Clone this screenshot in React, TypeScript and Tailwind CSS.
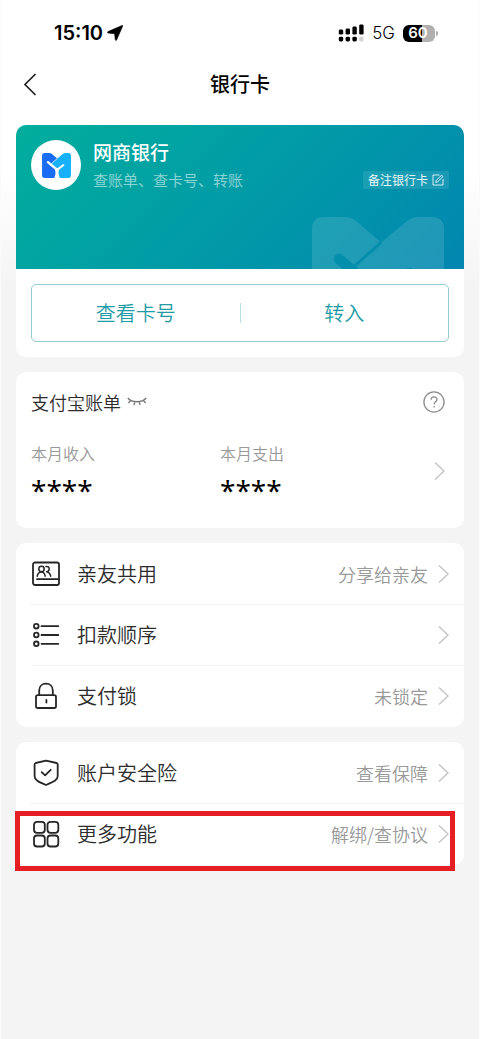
import { useId, type ReactNode } from "react";

function BankMark({ className, left, right }: { className: string; left: string; right: string }) {
  const id = useId();
  return (
    <svg viewBox="0 0 88 76" className={className} aria-hidden="true">
      <mask id={id} maskUnits="userSpaceOnUse" x="0" y="0" width="88" height="76">
        <rect width="88" height="76" fill="white" />
        <g fill="none" stroke="black" strokeLinecap="round" strokeLinejoin="round">
          <path d="M18 28 L44 50" strokeWidth="7" />
          <path d="M65 37 L47 50" strokeWidth="6" />
          <path d="M46 17 L28 33" strokeWidth="2" strokeLinecap="butt" />
        </g>
        <path d="M37 45 Q42 53 41 62 Q40 70 37 76 H54 Q50 68 50 60 Q50 53 54 46 Z" fill="black" />
      </mask>
      <g mask={`url(#${id})`}>
        <path d="M8 0 H22 Q27 0 31 4 L46 17 L28 33 L45 45 V76 H8 Q0 76 0 68 V8 Q0 0 8 0 Z" fill={left} />
        <path d="M80 0 H71 Q67 0 63 3 L46 17 L28 33 L45 45 V76 H80 Q88 76 88 68 V8 Q88 0 80 0 Z" fill={right} />
      </g>
    </svg>
  );
}

function Chevron() {
  return (
    <svg viewBox="0 0 11 20" className="h-5 w-[11px] shrink-0" fill="none" stroke="#c4c4c4" strokeWidth="1.4" aria-hidden="true">
      <path d="M1 1.5 L10 10 L1 18.5" />
    </svg>
  );
}

function RowIcon({ children }: { children: ReactNode }) {
  return (
    <svg viewBox="0 0 30 30" className="size-[30px] shrink-0" fill="none" stroke="#262626" strokeWidth="1.8" strokeLinecap="round" strokeLinejoin="round" aria-hidden="true">
      {children}
    </svg>
  );
}

const shareIcon = (
  <RowIcon>
    <rect x="2" y="3.5" width="26" height="22.5" rx="2" />
    <path d="M6 20.2 H27.5" />
    <circle cx="10.5" cy="10" r="2.7" strokeWidth="1.5" />
    <path d="M6.2 17.2 C6.6 14.8 8.2 13.2 10.4 12.8 C12.4 13.2 13.9 14.8 14.2 17.2" strokeWidth="1.5" />
    <path d="M15 7.5 C16.9 7 18.3 8.3 18.2 10 C18.1 11.6 17 12.6 15.6 12.7 C17.9 13.2 19.3 14.8 19.7 17.2" strokeWidth="1.5" />
  </RowIcon>
);

const orderIcon = (
  <RowIcon>
    <circle cx="5.3" cy="6.2" r="2.3" />
    <circle cx="5.3" cy="15" r="2.3" />
    <circle cx="5.3" cy="23.8" r="2.3" />
    <path d="M10.5 6.2 H27.3 M10.5 15 H27.3 M10.5 23.8 H27.3" />
  </RowIcon>
);

const lockIcon = (
  <RowIcon>
    <rect x="5" y="14.2" width="20" height="12.8" rx="1.8" />
    <path d="M8.2 14 V9.5 C8.2 5.5 11 2.7 15 2.7 C19 2.7 21.8 5.5 21.8 9.5 V14" />
    <path d="M15.4 18.8 V21.6" />
  </RowIcon>
);

const shieldIcon = (
  <RowIcon>
    <path d="M15 2.6 L25.6 5 Q26.7 5.3 26.7 6.4 V18.3 C26.7 22 23 23.8 15 27 C7 23.8 3.6 22 3.6 18.3 V6.4 Q3.6 5.3 4.7 5 Z" />
    <path d="M10.7 14.2 L14.1 17.4 L19.7 11.8" />
  </RowIcon>
);

const moreIcon = (
  <RowIcon>
    <rect x="3" y="2.8" width="10.8" height="11" rx="3" />
    <rect x="16.5" y="2.8" width="10.8" height="11" rx="3" />
    <rect x="3" y="16.5" width="10.8" height="11" rx="3" />
    <rect x="16.5" y="16.5" width="10.8" height="11" rx="3" />
  </RowIcon>
);

type Item = { icon: ReactNode; label: string; value?: string };

const accountItems: Item[] = [
  { icon: shareIcon, label: "亲友共用", value: "分享给亲友" },
  { icon: orderIcon, label: "扣款顺序" },
  { icon: lockIcon, label: "支付锁", value: "未锁定" },
];

const serviceItems: Item[] = [
  { icon: shieldIcon, label: "账户安全险", value: "查看保障" },
  { icon: moreIcon, label: "更多功能", value: "解绑/查协议" },
];

function ItemList({ items }: { items: Item[] }) {
  return (
    <ul className="rounded-[10px] bg-white pt-px pl-[15px]">
      {items.map((item) => (
        <li key={item.label} className="border-b border-[#f3f3f3] last:border-transparent">
          <button type="button" className="flex h-[60px] w-full items-center pr-[15px] text-left">
            {item.icon}
            <span className="ml-4 flex-1 text-[20px] leading-7 text-[#2c2c2c]">{item.label}</span>
            {item.value && <span className="mr-[10px] text-[18px] leading-6 text-[#999]">{item.value}</span>}
            <Chevron />
          </button>
        </li>
      ))}
    </ul>
  );
}

function StatusBar() {
  return (
    <div className="flex h-[66px] items-center justify-between pr-[41px] pl-[53px] font-['Inter','Noto_Sans_CJK_SC',sans-serif] text-black">
      <div className="flex items-center gap-1">
        <span className="text-[20px] leading-6 font-semibold">15:10</span>
        <svg viewBox="0 0 16 16" className="size-4" aria-hidden="true">
          <path d="M15 .5 Q16 .2 15.6 1.2 L9.6 15 Q8.8 16.3 8.3 14.8 L7.6 8.7 L1.2 8.1 Q-.4 7.6 1 6.6 Z" fill="#000" stroke="#000" strokeWidth="0.6" />
        </svg>
      </div>
      <div className="flex items-center gap-2">
        <svg viewBox="0 0 26 18" className="h-[18px] w-[26px]" aria-hidden="true">
          <rect x="0.8" y="5.6" width="4.4" height="5" rx="1.4" />
          <rect x="7.6" y="4.4" width="4.4" height="6.2" rx="1.4" />
          <rect x="14.4" y="2.6" width="4.4" height="8" rx="1.4" />
          <rect x="21.2" y="0.4" width="4.4" height="10.2" rx="1.4" />
          <rect x="0.8" y="12.8" width="4.4" height="4.6" rx="1.4" />
          <rect x="7.6" y="12.8" width="4.4" height="4.6" rx="1.4" />
          <rect x="14.4" y="12.8" width="4.4" height="4.6" rx="1.4" />
          <rect x="21.2" y="12.8" width="4.4" height="4.6" rx="1.4" fill="#d2d2d2" />
        </svg>
        <span className="text-[17px] leading-6">5G</span>
        <div className="flex items-center gap-px">
          <span className="flex h-[17px] w-8 items-center justify-center rounded-[6px] bg-[linear-gradient(90deg,#000_60%,#b0b0b0_60%)] pr-0.5 text-[15px] leading-4 font-semibold text-white">
            60
          </span>
          <span className="h-[5px] w-0.5 rounded-r-full bg-[#b0b0b0]" />
        </div>
      </div>
    </div>
  );
}

function Amount({ label }: { label: string }) {
  return (
    <div>
      <dt className="text-[16px] leading-6 text-[#999]">{label}</dt>
      <dd className="h-9 pt-1 font-['Noto_Sans',sans-serif] text-[28px] leading-[42px] font-normal text-black">****</dd>
    </div>
  );
}

export default function App() {
  return (
    <div className="relative min-h-screen border-x border-[#fafafa] bg-[linear-gradient(180deg,#fff_170px,#f4f4f4_290px)] font-['Noto_Sans_CJK_SC',sans-serif] font-[350]">
      <StatusBar />

      <header className="grid h-9 grid-cols-[1fr_auto_1fr] items-center px-5">
        <button type="button" aria-label="返回" className="w-6">
          <svg viewBox="0 0 24 24" className="size-6" fill="none" stroke="#222" strokeWidth="1.7" aria-hidden="true">
            <path d="M14.5 2 L4 12.5 L14.5 23" />
          </svg>
        </button>
        <h1 className="text-[20px] leading-7 font-medium text-black">银行卡</h1>
      </header>

      <main className="flex flex-col gap-[15px] px-[15px] pt-[23px] pb-10">
        <section className="overflow-hidden rounded-[10px] bg-white">
          <div className="relative h-36 overflow-hidden bg-[linear-gradient(135deg,#02ae9c,#0199a8_55%,#0286b0)] px-[15px] pt-[15px]">
            <BankMark className="absolute top-[92px] right-5 h-[114px] w-[132px] opacity-12" left="#fff" right="#fff" />
            <div className="flex">
              <div className="flex size-[50px] shrink-0 items-center justify-center rounded-full bg-white">
                <BankMark className="h-[25px] w-[29px]" left="#1a6cf5" right="#16b0fb" />
              </div>
              <div className="ml-3 flex-1">
                <h2 className="text-[19px] leading-6 font-medium text-white">网商银行</h2>
                <div className="flex h-8 items-center justify-between">
                  <p className="text-[15px] leading-5 text-white/55">查账单、查卡号、转账</p>
                  <button type="button" className="flex h-[18px] items-center gap-1 rounded-[2px] bg-white/10 px-[5px] text-[12px] leading-4 font-normal text-white/90">
                    备注银行卡
                    <svg viewBox="0 0 12 12" className="size-3" fill="none" stroke="currentColor" strokeWidth="0.9" aria-hidden="true">
                      <path d="M7.5 1 H1 V11 H11 V5" />
                      <path d="M3.8 8.4 L4.3 6.4 L9.6 1.1 L11 2.5 L5.7 7.8 Z" />
                    </svg>
                  </button>
                </div>
              </div>
            </div>
          </div>
          <div className="p-[15px]">
            <div className="flex h-[58px] items-center rounded-[5px] border border-[#93cdd3] text-[20px] leading-7 text-[#1f9ba5]">
              <button type="button" className="h-full flex-1">查看卡号</button>
              <span className="h-5 w-px bg-[#b9dfe3]" />
              <button type="button" className="h-full flex-1">转入</button>
            </div>
          </div>
        </section>

        <section className="h-[156px] rounded-[10px] bg-white pt-4 pr-[19px] pl-[15px]">
          <div className="flex h-7 items-center">
            <h2 className="text-[18px] leading-7 text-[#2c2c2c]">支付宝账单</h2>
            <button type="button" aria-label="显示金额" className="ml-1.5">
              <svg viewBox="0 0 20 10" className="h-[10px] w-5" fill="none" stroke="#777" strokeWidth="1.3" aria-hidden="true">
                <path d="M.8 1 C5 6 15 6 19.2 1 M3.7 3.3 L1.4 6 M7.9 4.7 L6.9 8 M12.1 4.7 L13.1 8 M16.3 3.3 L18.6 6" />
              </svg>
            </button>
            <button type="button" aria-label="帮助" className="ml-auto">
              <svg viewBox="0 0 22 22" className="size-[22px]" fill="none" stroke="#8c8c8c" strokeWidth="1.3" aria-hidden="true">
                <circle cx="11" cy="11" r="10.1" />
                <path d="M8.1 8.8 C8.1 4.9 14 5 14 8.6 C14 10.9 11.1 10.8 11.1 13.4 M11.1 15 V16.4" />
              </svg>
            </button>
          </div>
          <div className="mt-[25px] flex items-center justify-between">
            <dl className="grid flex-1 grid-cols-[189px_1fr]">
              <Amount label="本月收入" />
              <Amount label="本月支出" />
            </dl>
            <Chevron />
          </div>
        </section>

        <ItemList items={accountItems} />
        <ItemList items={serviceItems} />
      </main>

      <div className="pointer-events-none absolute top-[811px] right-6 left-3.5 h-[60px] border-5 border-[#e61f26]" />
    </div>
  );
}
